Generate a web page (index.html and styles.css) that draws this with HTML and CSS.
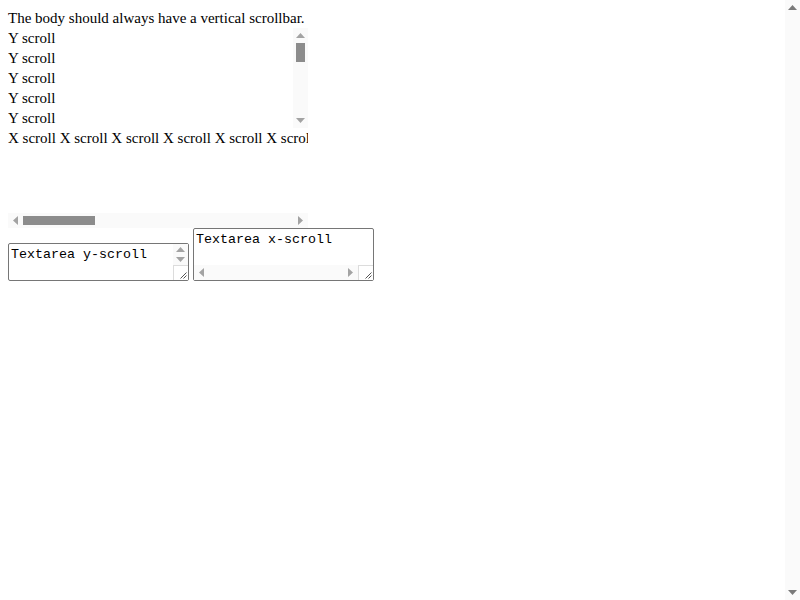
FILE: index.html
```html
<!DOCTYPE html>
<html>
<head>
<meta charset="utf-8">
<link rel="stylesheet" href="styles.css">
</head>
<body class="body">
<main class="main">
  <div class="intro">The body should always have a vertical scrollbar.</div>

  <div class="ybox">
    <div class="ycontent">
      <div>Y scroll</div><div>Y scroll</div><div>Y scroll</div><div>Y scroll</div><div>Y scroll</div>
    </div>
    <div class="vbar">
      <span class="btn"><svg class="arr" width="9" height="5" viewBox="0 0 9 5"><polygon points="0,5 4.5,0 9,5"/></svg></span>
      <span class="vtrack"><span class="vthumb"></span></span>
      <span class="btn"><svg class="arr" width="9" height="5" viewBox="0 0 9 5"><polygon points="0,0 9,0 4.5,5"/></svg></span>
    </div>
  </div>

  <div class="xbox">
    <div class="xcontent">X scroll X scroll X scroll X scroll X scroll X scroll</div>
    <div class="hbar">
      <span class="btn"><svg class="arr" width="5" height="9" viewBox="0 0 5 9"><polygon points="5,0 5,9 0,4.5"/></svg></span>
      <span class="htrack"><span class="hthumb"></span></span>
      <span class="btn"><svg class="arr" width="5" height="9" viewBox="0 0 5 9"><polygon points="0,0 5,4.5 0,9"/></svg></span>
    </div>
  </div>

  <div class="ta-row">
    <div class="tbox tbox-y">
      <textarea class="ta">Textarea y-scroll</textarea>
      <div class="tvcol">
        <span class="tbtn"><svg class="arr" width="9" height="5" viewBox="0 0 9 5"><polygon points="0,5 4.5,0 9,5"/></svg></span>
        <span class="tbtn"><svg class="arr" width="9" height="5" viewBox="0 0 9 5"><polygon points="0,0 9,0 4.5,5"/></svg></span>
        <span class="grip"><svg width="15" height="15" viewBox="0 0 15 15"><path d="M13.5 7.5 L7.5 13.5 M13.5 10.5 L10.5 13.5" stroke="#555" stroke-width="1" fill="none"/></svg></span>
      </div>
    </div>
    <div class="tbox tbox-x">
      <textarea class="ta" wrap="off">Textarea x-scroll</textarea>
      <div class="throw">
        <span class="btn"><svg class="arr" width="5" height="9" viewBox="0 0 5 9"><polygon points="5,0 5,9 0,4.5"/></svg></span>
        <span class="htrack"></span>
        <span class="btn"><svg class="arr" width="5" height="9" viewBox="0 0 5 9"><polygon points="0,0 5,4.5 0,9"/></svg></span>
        <span class="grip"><svg width="15" height="15" viewBox="0 0 15 15"><path d="M13.5 7.5 L7.5 13.5 M13.5 10.5 L10.5 13.5" stroke="#555" stroke-width="1" fill="none"/></svg></span>
      </div>
    </div>
  </div>
</main>
<aside class="pagebar">
  <span class="btn"><svg class="arr arr-dark" width="9" height="5" viewBox="0 0 9 5"><polygon points="0,5 4.5,0 9,5"/></svg></span>
  <span class="btn"><svg class="arr arr-dark" width="9" height="5" viewBox="0 0 9 5"><polygon points="0,0 9,0 4.5,5"/></svg></span>
</aside>
</body>
</html>
```
FILE: styles.css
```css
html, body {
  margin: 0;
  padding: 0;
}
.body {
  display: flex;
  height: 600px;
  overflow: hidden;
  font-family: "Liberation Serif", "Times New Roman", serif;
  font-size: 15px;
  line-height: 20px;
  color: #000;
  background: #fff;
}
.main {
  flex: 1;
  padding: 8px;
  min-width: 0;
}
.pagebar {
  width: 15px;
  background: #fafafa;
  display: flex;
  flex-direction: column;
  justify-content: space-between;
}
.btn {
  width: 15px;
  height: 15px;
  flex: 0 0 15px;
  display: flex;
  align-items: center;
  justify-content: center;
}
.arr {
  display: block;
  fill: #a3a3a3;
}
.arr-dark {
  fill: #7a7a7a;
}

/* Y scroll box */
.ybox {
  width: 300px;
  height: 100px;
  display: flex;
}
.ycontent {
  flex: 1;
  overflow: hidden;
  white-space: nowrap;
}
.vbar {
  width: 15px;
  background: #fafafa;
  display: flex;
  flex-direction: column;
}
.vtrack {
  flex: 1;
  display: flex;
  flex-direction: column;
  align-items: center;
}
.vthumb {
  width: 9px;
  height: 19px;
  background: #8c8c8c;
}

/* X scroll box */
.xbox {
  width: 300px;
  height: 100px;
  display: flex;
  flex-direction: column;
}
.xcontent {
  flex: 1;
  overflow: hidden;
  white-space: nowrap;
}
.hbar {
  height: 15px;
  background: #fafafa;
  display: flex;
}
.htrack {
  flex: 1;
  display: flex;
  align-items: center;
}
.hthumb {
  width: 72px;
  height: 9px;
  background: #8c8c8c;
}

/* Textareas */
.ta-row {
  display: flex;
  align-items: flex-end;
  gap: 4px;
}
.tbox {
  width: 181px;
  box-sizing: border-box;
  border: 1px solid #767676;
  border-radius: 2px;
  display: flex;
  background: #fff;
}
.tbox-y {
  height: 38px;
  flex-direction: row;
}
.tbox-x {
  height: 53px;
  flex-direction: column;
}
.ta {
  flex: 1;
  min-width: 0;
  min-height: 0;
  margin: 0;
  border: 0;
  padding: 3px 2px 1px 2px;
  resize: none;
  overflow: hidden;
  outline: none;
  background: transparent;
  color: #000;
  font-family: "Liberation Mono", "Courier New", monospace;
  font-size: 13.333px;
  line-height: 16px;
  white-space: pre;
}
.tvcol {
  width: 15px;
  display: flex;
  flex-direction: column;
  background: #fafafa;
}
.tbtn {
  flex: 1;
  display: flex;
  align-items: center;
  justify-content: center;
}
.throw {
  height: 15px;
  display: flex;
  background: #fafafa;
}
.grip {
  width: 15px;
  height: 15px;
  flex: 0 0 15px;
  box-sizing: border-box;
  border-top: 1px solid #dcdcdc;
  border-left: 1px solid #dcdcdc;
  background: #fff;
  display: block;
}
.grip svg {
  display: block;
  margin: -1px 0 0 -1px;
}
```
